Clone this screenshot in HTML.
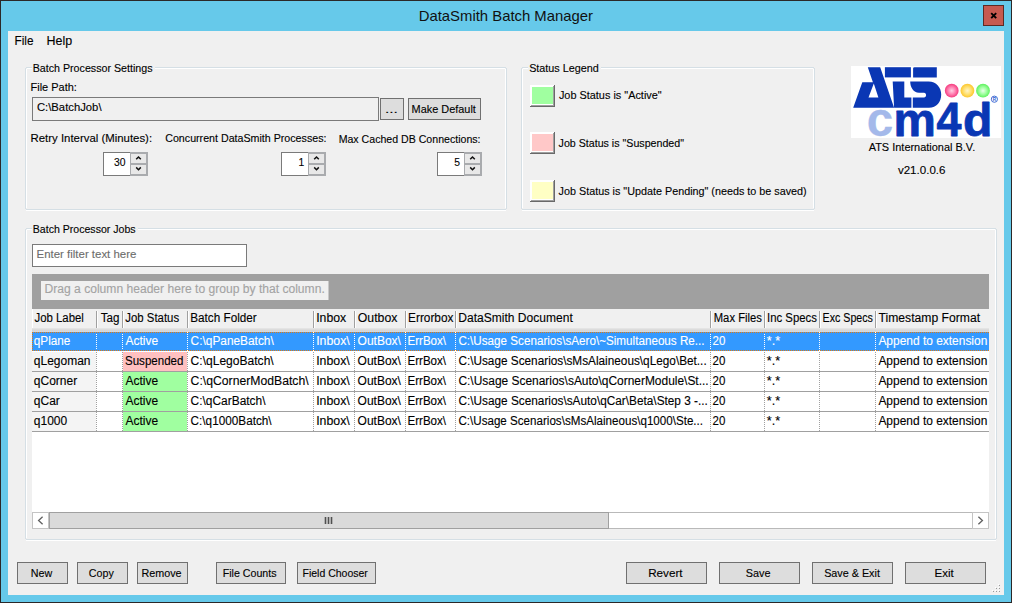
<!DOCTYPE html>
<html><head><meta charset="utf-8"><title>DataSmith Batch Manager</title>
<style>
html,body{margin:0;padding:0;width:1012px;height:603px;overflow:hidden;background:#f0f0f0;}
svg{display:block;font-family:"Liberation Sans",sans-serif;}
</style></head><body>
<svg width="1012" height="603" viewBox="0 0 1012 603" shape-rendering="crispEdges">
<g shape-rendering="auto">
<rect x="0" y="0" width="1012" height="603" fill="#2b2828"/>
<rect x="1" y="1" width="1010" height="601" fill="#66c9ea"/>
<rect x="8" y="31" width="996" height="564" fill="#f0f0f0"/>
<text x="418.71" y="20.70" font-size="15" fill="#111" textLength="174.31" lengthAdjust="spacingAndGlyphs">DataSmith Batch Manager</text>
<rect x="983.5" y="5.5" width="20" height="20" fill="#c65a50" stroke="#5c2a24" stroke-width="1"/>
<path d="M991.2,13.2 L996.2,18.2 M996.2,13.2 L991.2,18.2" stroke="#000" stroke-width="1.9"/>
<text x="14.52" y="44.90" font-size="12" fill="#000" stroke="#000" stroke-width="0.12" textLength="19.01" lengthAdjust="spacingAndGlyphs">File</text>
<text x="46.46" y="44.90" font-size="12" fill="#000" stroke="#000" stroke-width="0.12" textLength="25.64" lengthAdjust="spacingAndGlyphs">Help</text>
<rect x="26" y="67" width="6" height="1" fill="#d5dfe5"/>
<rect x="155" y="67" width="351" height="1" fill="#d5dfe5"/>
<rect x="27" y="68" width="5" height="1" fill="#fff"/>
<rect x="155" y="68" width="350" height="1" fill="#fff"/>
<rect x="25" y="68" width="1" height="141" fill="#d5dfe5"/>
<rect x="26" y="69" width="1" height="139" fill="#fff"/>
<rect x="506" y="68" width="1" height="141" fill="#d5dfe5"/>
<rect x="505" y="69" width="1" height="139" fill="#fff"/>
<rect x="26" y="209" width="480" height="1" fill="#d5dfe5"/>
<rect x="26" y="210" width="480" height="1" fill="#fff"/>
<text x="32.66" y="72.00" font-size="11.5" fill="#000" stroke="#000" stroke-width="0.12" textLength="119.92" lengthAdjust="spacingAndGlyphs">Batch Processor Settings</text>
<text x="30.54" y="90.70" font-size="11.5" fill="#000" stroke="#000" stroke-width="0.12" textLength="46.39" lengthAdjust="spacingAndGlyphs">File Path:</text>
<rect x="32.5" y="97.5" width="346" height="23" fill="#f0f0f0" stroke="#7a7a7a" stroke-width="1"/>
<text x="36.91" y="111.00" font-size="11.5" fill="#000" stroke="#000" stroke-width="0.12" textLength="64.63" lengthAdjust="spacingAndGlyphs">C:\BatchJob\</text>
<rect x="380.5" y="98.5" width="23" height="21" fill="#dddddd" stroke="#707070" stroke-width="1"/>
<text x="384.94" y="113.00" font-size="11.5" fill="#000" stroke="#000" stroke-width="0.12" textLength="12.99" lengthAdjust="spacingAndGlyphs">...</text>
<rect x="408.5" y="98.5" width="72" height="21" fill="#dddddd" stroke="#707070" stroke-width="1"/>
<text x="411.55" y="113.00" font-size="11.5" fill="#000" stroke="#000" stroke-width="0.12" textLength="64.30" lengthAdjust="spacingAndGlyphs">Make Default</text>
<text x="30.51" y="142.10" font-size="11.5" fill="#000" stroke="#000" stroke-width="0.12" textLength="121.58" lengthAdjust="spacingAndGlyphs">Retry Interval (Minutes):</text>
<text x="165.24" y="142.40" font-size="11.5" fill="#000" stroke="#000" stroke-width="0.12" textLength="161.22" lengthAdjust="spacingAndGlyphs">Concurrent DataSmith Processes:</text>
<text x="338.67" y="142.50" font-size="11.5" fill="#000" stroke="#000" stroke-width="0.12" textLength="141.89" lengthAdjust="spacingAndGlyphs">Max Cached DB Connections:</text>
<rect x="103.5" y="152.5" width="44" height="23" fill="#fff" stroke="#7a7a7a" stroke-width="1"/>
<rect x="130" y="152" width="18" height="24" fill="#a9abae"/>
<rect x="131" y="154" width="15" height="9" fill="#e8e8e8"/>
<rect x="131" y="165" width="15" height="9" fill="#e8e8e8"/>
<path d="M136.2,159.3 L138.5,157.0 L140.8,159.3" stroke="#111" stroke-width="1.5" fill="none"/>
<path d="M136.2,167.4 L138.5,169.7 L140.8,167.4" stroke="#111" stroke-width="1.5" fill="none"/>
<text x="114.04" y="165.90" font-size="11.5" fill="#000" stroke="#000" stroke-width="0.12" textLength="11.51" lengthAdjust="spacingAndGlyphs">30</text>
<rect x="281.5" y="152.5" width="44" height="23" fill="#fff" stroke="#7a7a7a" stroke-width="1"/>
<rect x="308" y="152" width="18" height="24" fill="#a9abae"/>
<rect x="309" y="154" width="15" height="9" fill="#e8e8e8"/>
<rect x="309" y="165" width="15" height="9" fill="#e8e8e8"/>
<path d="M314.2,159.3 L316.5,157.0 L318.8,159.3" stroke="#111" stroke-width="1.5" fill="none"/>
<path d="M314.2,167.4 L316.5,169.7 L318.8,167.4" stroke="#111" stroke-width="1.5" fill="none"/>
<text x="298.58" y="165.90" font-size="11.5" fill="#000" stroke="#000" stroke-width="0.12" textLength="5.76" lengthAdjust="spacingAndGlyphs">1</text>
<rect x="437.5" y="152.5" width="44" height="23" fill="#fff" stroke="#7a7a7a" stroke-width="1"/>
<rect x="464" y="152" width="18" height="24" fill="#a9abae"/>
<rect x="465" y="154" width="15" height="9" fill="#e8e8e8"/>
<rect x="465" y="165" width="15" height="9" fill="#e8e8e8"/>
<path d="M470.2,159.3 L472.5,157.0 L474.8,159.3" stroke="#111" stroke-width="1.5" fill="none"/>
<path d="M470.2,167.4 L472.5,169.7 L474.8,167.4" stroke="#111" stroke-width="1.5" fill="none"/>
<text x="454.29" y="165.90" font-size="11.5" fill="#000" stroke="#000" stroke-width="0.12" textLength="5.76" lengthAdjust="spacingAndGlyphs">5</text>
<rect x="522" y="67" width="6" height="1" fill="#d5dfe5"/>
<rect x="601" y="67" width="213" height="1" fill="#d5dfe5"/>
<rect x="523" y="68" width="5" height="1" fill="#fff"/>
<rect x="601" y="68" width="212" height="1" fill="#fff"/>
<rect x="521" y="68" width="1" height="141" fill="#d5dfe5"/>
<rect x="522" y="69" width="1" height="139" fill="#fff"/>
<rect x="814" y="68" width="1" height="141" fill="#d5dfe5"/>
<rect x="813" y="69" width="1" height="139" fill="#fff"/>
<rect x="522" y="209" width="292" height="1" fill="#d5dfe5"/>
<rect x="522" y="210" width="292" height="1" fill="#fff"/>
<text x="529.13" y="71.90" font-size="11.5" fill="#000" stroke="#000" stroke-width="0.12" textLength="69.70" lengthAdjust="spacingAndGlyphs">Status Legend</text>
<rect x="530" y="85" width="25" height="22" fill="#696969"/>
<rect x="530" y="85" width="24" height="21" fill="#ffffff"/>
<rect x="531" y="86" width="23" height="20" fill="#a0a0a0"/>
<rect x="531" y="86" width="22" height="19" fill="#ffffff"/>
<rect x="532" y="87" width="21" height="17" fill="#a0ffa0"/>
<rect x="530" y="132" width="25" height="22" fill="#696969"/>
<rect x="530" y="132" width="24" height="21" fill="#ffffff"/>
<rect x="531" y="133" width="23" height="20" fill="#a0a0a0"/>
<rect x="531" y="133" width="22" height="19" fill="#ffffff"/>
<rect x="532" y="134" width="21" height="17" fill="#ffc8c8"/>
<rect x="530" y="180" width="25" height="22" fill="#696969"/>
<rect x="530" y="180" width="24" height="21" fill="#ffffff"/>
<rect x="531" y="181" width="23" height="20" fill="#a0a0a0"/>
<rect x="531" y="181" width="22" height="19" fill="#ffffff"/>
<rect x="532" y="182" width="21" height="17" fill="#ffffc4"/>
<text x="558.91" y="98.90" font-size="11.5" fill="#000" stroke="#000" stroke-width="0.12" textLength="102.78" lengthAdjust="spacingAndGlyphs">Job Status is &quot;Active&quot;</text>
<text x="558.61" y="146.90" font-size="11.5" fill="#000" stroke="#000" stroke-width="0.12" textLength="125.34" lengthAdjust="spacingAndGlyphs">Job Status is &quot;Suspended&quot;</text>
<text x="558.61" y="194.90" font-size="11.5" fill="#000" stroke="#000" stroke-width="0.12" textLength="248.06" lengthAdjust="spacingAndGlyphs">Job Status is &quot;Update Pending&quot; (needs to be saved)</text>
<g transform="translate(851,66)">
<rect x="0" y="0" width="150" height="72" fill="#fff"/>
<path fill="#0a37b4" fill-rule="evenodd" d="M16.8,1.2 L29.2,1.2 L43.1,41.7 L2.2,41.7 L11.3,16.2 L21.9,16.2 Z M17.5,31.5 L27.4,31.5 L22.8,17.4 Z"/>
<rect x="33.9" y="1.2" width="26" height="10.2" fill="#0a37b4"/>
<path fill="#0a37b4" d="M63.5,1.2 L85.8,1.2 L85.8,11.4 L62.1,11.4 L62.1,2.6 Q62.1,1.2 63.5,1.2 Z"/>
<path fill="#0a37b4" d="M41.7,15.4 L53.3,15.4 L53.3,31.5 L60.4,31.5 L60.4,41.7 L43.1,41.7 Z"/>
<path fill="#0a37b4" d="M59.2,15.4 L77.5,15.4 C85.5,15.4 90.2,21.5 90.2,28.5 C90.2,36 85.5,41.7 78,41.7 L61.8,41.7 L61.8,31.5 L73,31.5 C75.8,31.5 75.8,26.7 73,26.7 L68,26.7 C62.5,26.7 59.2,21 59.2,15.4 Z"/>
<defs><radialGradient id="gp" cx="0.5" cy="0.5" r="0.5"><stop offset="0" stop-color="#ffd0e4"/><stop offset="0.55" stop-color="#ff7fb0"/><stop offset="1" stop-color="#f43a7e"/></radialGradient><radialGradient id="gy" cx="0.5" cy="0.5" r="0.5"><stop offset="0" stop-color="#fff4c8"/><stop offset="0.55" stop-color="#ffe070"/><stop offset="1" stop-color="#fcc62c"/></radialGradient><radialGradient id="gg" cx="0.5" cy="0.5" r="0.5"><stop offset="0" stop-color="#eaffea"/><stop offset="0.55" stop-color="#9cff9c"/><stop offset="1" stop-color="#5cf05c"/></radialGradient></defs>
<circle cx="100.7" cy="24.7" r="6.9" fill="url(#gp)"/>
<circle cx="116.4" cy="24.7" r="6.9" fill="url(#gy)"/>
<circle cx="132" cy="24.7" r="6.9" fill="url(#gg)"/>
<circle cx="143.4" cy="33.2" r="3.1" fill="none" stroke="#2f5fcf" stroke-width="0.9"/>
<text x="141.8" y="35" font-size="4.6" fill="#2f5fcf" font-family="Liberation Sans" font-weight="bold">R</text>
</g>
<text transform="translate(866.85,135.95) scale(1.0000,1)" font-size="47.50" fill="#a4b9ea" stroke="#a4b9ea" stroke-width="0.3" stroke-linejoin="round" font-weight="bold">c</text>
<text transform="translate(893.54,135.90) scale(1.0197,1)" font-size="46.70" fill="#0a37b4" stroke="#0a37b4" stroke-width="0.8" stroke-linejoin="round" font-weight="bold">m</text>
<text transform="translate(936.56,135.90) scale(0.9163,1)" font-size="49.00" fill="#0a37b4" stroke="#0a37b4" stroke-width="0.8" stroke-linejoin="round" font-weight="bold">4</text>
<text transform="translate(963.04,135.70) scale(1.0297,1)" font-size="46.80" fill="#0a37b4" stroke="#0a37b4" stroke-width="0.8" stroke-linejoin="round" font-weight="bold">d</text>
<text x="868.70" y="151.00" font-size="11.5" fill="#000" stroke="#000" stroke-width="0.12" textLength="106.52" lengthAdjust="spacingAndGlyphs">ATS International B.V.</text>
<text x="897.90" y="173.50" font-size="11.5" fill="#000" stroke="#000" stroke-width="0.12" textLength="47.62" lengthAdjust="spacingAndGlyphs">v21.0.0.6</text>
<rect x="26" y="228" width="6" height="1" fill="#d5dfe5"/>
<rect x="138" y="228" width="858" height="1" fill="#d5dfe5"/>
<rect x="27" y="229" width="5" height="1" fill="#fff"/>
<rect x="138" y="229" width="857" height="1" fill="#fff"/>
<rect x="25" y="229" width="1" height="310" fill="#d5dfe5"/>
<rect x="26" y="230" width="1" height="308" fill="#fff"/>
<rect x="996" y="229" width="1" height="310" fill="#d5dfe5"/>
<rect x="995" y="230" width="1" height="308" fill="#fff"/>
<rect x="26" y="539" width="970" height="1" fill="#d5dfe5"/>
<rect x="26" y="540" width="970" height="1" fill="#fff"/>
<text x="32.77" y="233.00" font-size="11.5" fill="#000" stroke="#000" stroke-width="0.12" textLength="102.84" lengthAdjust="spacingAndGlyphs">Batch Processor Jobs</text>
<rect x="32.5" y="244.5" width="214" height="22" fill="#fff" stroke="#7a7a7a" stroke-width="1"/>
<text x="36.61" y="258.00" font-size="11.5" fill="#6d6d6d" stroke="#6d6d6d" stroke-width="0.12" textLength="99.74" lengthAdjust="spacingAndGlyphs">Enter filter text here</text>
<rect x="32" y="274" width="957" height="35" fill="#a0a0a0"/>
<rect x="41" y="281" width="287.5" height="19" fill="#f0f0f0"/>
<text x="44.49" y="293.40" font-size="12" fill="#a3a3a3" stroke="#a3a3a3" stroke-width="0.12" textLength="280.28" lengthAdjust="spacingAndGlyphs">Drag a column header here to group by that column.</text>
<rect x="32" y="309" width="957" height="23" fill="#f0f0f0"/>
<rect x="32" y="328" width="957" height="1" fill="#e4e4e4"/>
<rect x="32" y="329" width="957" height="1" fill="#dcdcdc"/>
<rect x="32" y="330" width="957" height="1" fill="#d6d6d6"/>
<rect x="32" y="331" width="957" height="1" fill="#d8d8d8"/>
<rect x="32" y="309" width="1" height="19" fill="#ffffff"/>
<rect x="96" y="311" width="1" height="17" fill="#a0a0a0"/>
<rect x="97" y="311" width="1" height="17" fill="#ffffff"/>
<rect x="122" y="311" width="1" height="17" fill="#a0a0a0"/>
<rect x="123" y="311" width="1" height="17" fill="#ffffff"/>
<rect x="187" y="311" width="1" height="17" fill="#a0a0a0"/>
<rect x="188" y="311" width="1" height="17" fill="#ffffff"/>
<rect x="313" y="311" width="1" height="17" fill="#a0a0a0"/>
<rect x="314" y="311" width="1" height="17" fill="#ffffff"/>
<rect x="354" y="311" width="1" height="17" fill="#a0a0a0"/>
<rect x="355" y="311" width="1" height="17" fill="#ffffff"/>
<rect x="405" y="311" width="1" height="17" fill="#a0a0a0"/>
<rect x="406" y="311" width="1" height="17" fill="#ffffff"/>
<rect x="455" y="311" width="1" height="17" fill="#a0a0a0"/>
<rect x="456" y="311" width="1" height="17" fill="#ffffff"/>
<rect x="710" y="311" width="1" height="17" fill="#a0a0a0"/>
<rect x="711" y="311" width="1" height="17" fill="#ffffff"/>
<rect x="764" y="311" width="1" height="17" fill="#a0a0a0"/>
<rect x="765" y="311" width="1" height="17" fill="#ffffff"/>
<rect x="819" y="311" width="1" height="17" fill="#a0a0a0"/>
<rect x="820" y="311" width="1" height="17" fill="#ffffff"/>
<rect x="875" y="311" width="1" height="17" fill="#a0a0a0"/>
<rect x="876" y="311" width="1" height="17" fill="#ffffff"/>
<text x="34.51" y="322.20" font-size="12" fill="#000" stroke="#000" stroke-width="0.12" textLength="49.39" lengthAdjust="spacingAndGlyphs">Job Label</text>
<text x="100.81" y="322.20" font-size="12" fill="#000" stroke="#000" stroke-width="0.12" textLength="18.71" lengthAdjust="spacingAndGlyphs">Tag</text>
<text x="125.31" y="322.20" font-size="12" fill="#000" stroke="#000" stroke-width="0.12" textLength="53.77" lengthAdjust="spacingAndGlyphs">Job Status</text>
<text x="190.22" y="322.20" font-size="12" fill="#000" stroke="#000" stroke-width="0.12" textLength="66.51" lengthAdjust="spacingAndGlyphs">Batch Folder</text>
<text x="316.18" y="322.20" font-size="12" fill="#000" stroke="#000" stroke-width="0.12" textLength="29.98" lengthAdjust="spacingAndGlyphs">Inbox</text>
<text x="357.79" y="322.20" font-size="12" fill="#000" stroke="#000" stroke-width="0.12" textLength="39.61" lengthAdjust="spacingAndGlyphs">Outbox</text>
<text x="408.12" y="322.20" font-size="12" fill="#000" stroke="#000" stroke-width="0.12" textLength="45.30" lengthAdjust="spacingAndGlyphs">Errorbox</text>
<text x="458.30" y="322.20" font-size="12" fill="#000" stroke="#000" stroke-width="0.12" textLength="114.45" lengthAdjust="spacingAndGlyphs">DataSmith Document</text>
<text x="713.76" y="322.20" font-size="12" fill="#000" stroke="#000" stroke-width="0.12" textLength="48.15" lengthAdjust="spacingAndGlyphs">Max Files</text>
<text x="767.06" y="322.20" font-size="12" fill="#000" stroke="#000" stroke-width="0.12" textLength="49.91" lengthAdjust="spacingAndGlyphs">Inc Specs</text>
<text x="822.61" y="322.20" font-size="12" fill="#000" stroke="#000" stroke-width="0.12" textLength="50.33" lengthAdjust="spacingAndGlyphs">Exc Specs</text>
<text x="878.50" y="322.20" font-size="12" fill="#000" stroke="#000" stroke-width="0.12" textLength="101.54" lengthAdjust="spacingAndGlyphs">Timestamp Format</text>
<rect x="32" y="332" width="957" height="180" fill="#ffffff"/>
<clipPath id="gclip"><rect x="32" y="309" width="957" height="203"/></clipPath><g clip-path="url(#gclip)">
<rect x="32" y="332" width="957" height="19" fill="#3399ff"/>
<text x="33.81" y="344.70" font-size="12" fill="#fff" stroke="#fff" stroke-width="0.12" textLength="36.54" lengthAdjust="spacingAndGlyphs">qPlane</text>
<text x="125.50" y="344.70" font-size="12" fill="#fff" stroke="#fff" stroke-width="0.12" textLength="32.68" lengthAdjust="spacingAndGlyphs">Active</text>
<text x="190.61" y="344.70" font-size="12" fill="#fff" stroke="#fff" stroke-width="0.12" textLength="83.15" lengthAdjust="spacingAndGlyphs">C:\qPaneBatch\</text>
<text x="316.17" y="344.70" font-size="12" fill="#fff" stroke="#fff" stroke-width="0.12" textLength="33.62" lengthAdjust="spacingAndGlyphs">Inbox\</text>
<text x="357.60" y="344.70" font-size="12" fill="#fff" stroke="#fff" stroke-width="0.12" textLength="43.35" lengthAdjust="spacingAndGlyphs">OutBox\</text>
<text x="407.43" y="344.70" font-size="12" fill="#fff" stroke="#fff" stroke-width="0.12" textLength="38.68" lengthAdjust="spacingAndGlyphs">ErrBox\</text>
<text x="458.42" y="344.70" font-size="12" fill="#fff" stroke="#fff" stroke-width="0.12" textLength="246.18" lengthAdjust="spacingAndGlyphs">C:\Usage Scenarios\sAero\~Simultaneous Re...</text>
<text x="712.62" y="344.70" font-size="12" fill="#fff" stroke="#fff" stroke-width="0.12" textLength="12.80" lengthAdjust="spacingAndGlyphs">20</text>
<text x="766.79" y="344.70" font-size="12" fill="#fff" stroke="#fff" stroke-width="0.12" textLength="13.40" lengthAdjust="spacingAndGlyphs">*.*</text>
<text x="878.40" y="344.70" font-size="12" fill="#fff" stroke="#fff" stroke-width="0.12" textLength="108.91" lengthAdjust="spacingAndGlyphs">Append to extension</text>
<line x1="96.5" y1="332" x2="96.5" y2="351" stroke="#ffffff" stroke-width="1" stroke-dasharray="1,1"/>
<line x1="122.5" y1="332" x2="122.5" y2="351" stroke="#ffffff" stroke-width="1" stroke-dasharray="1,1"/>
<line x1="187.5" y1="332" x2="187.5" y2="351" stroke="#ffffff" stroke-width="1" stroke-dasharray="1,1"/>
<line x1="313.5" y1="332" x2="313.5" y2="351" stroke="#ffffff" stroke-width="1" stroke-dasharray="1,1"/>
<line x1="354.5" y1="332" x2="354.5" y2="351" stroke="#ffffff" stroke-width="1" stroke-dasharray="1,1"/>
<line x1="405.5" y1="332" x2="405.5" y2="351" stroke="#ffffff" stroke-width="1" stroke-dasharray="1,1"/>
<line x1="455.5" y1="332" x2="455.5" y2="351" stroke="#ffffff" stroke-width="1" stroke-dasharray="1,1"/>
<line x1="710.5" y1="332" x2="710.5" y2="351" stroke="#ffffff" stroke-width="1" stroke-dasharray="1,1"/>
<line x1="764.5" y1="332" x2="764.5" y2="351" stroke="#ffffff" stroke-width="1" stroke-dasharray="1,1"/>
<line x1="819.5" y1="332" x2="819.5" y2="351" stroke="#ffffff" stroke-width="1" stroke-dasharray="1,1"/>
<line x1="875.5" y1="332" x2="875.5" y2="351" stroke="#ffffff" stroke-width="1" stroke-dasharray="1,1"/>
<rect x="32" y="352" width="64" height="19" fill="#f4f4f4"/>
<rect x="123" y="352" width="64" height="19" fill="#ffc0c0"/>
<rect x="32" y="371" width="957" height="1" fill="#a0a0a0"/>
<text x="33.80" y="364.70" font-size="12" fill="#000" stroke="#000" stroke-width="0.12" textLength="56.71" lengthAdjust="spacingAndGlyphs">qLegoman</text>
<text x="125.02" y="364.70" font-size="12" fill="#000" stroke="#000" stroke-width="0.12" textLength="58.37" lengthAdjust="spacingAndGlyphs">Suspended</text>
<text x="190.60" y="364.70" font-size="12" fill="#000" stroke="#000" stroke-width="0.12" textLength="83.12" lengthAdjust="spacingAndGlyphs">C:\qLegoBatch\</text>
<text x="316.17" y="364.70" font-size="12" fill="#000" stroke="#000" stroke-width="0.12" textLength="33.62" lengthAdjust="spacingAndGlyphs">Inbox\</text>
<text x="357.60" y="364.70" font-size="12" fill="#000" stroke="#000" stroke-width="0.12" textLength="43.35" lengthAdjust="spacingAndGlyphs">OutBox\</text>
<text x="407.43" y="364.70" font-size="12" fill="#000" stroke="#000" stroke-width="0.12" textLength="38.68" lengthAdjust="spacingAndGlyphs">ErrBox\</text>
<text x="458.41" y="364.70" font-size="12" fill="#000" stroke="#000" stroke-width="0.12" textLength="248.27" lengthAdjust="spacingAndGlyphs">C:\Usage Scenarios\sMsAlaineous\qLego\Bet...</text>
<text x="712.62" y="364.70" font-size="12" fill="#000" stroke="#000" stroke-width="0.12" textLength="12.80" lengthAdjust="spacingAndGlyphs">20</text>
<text x="766.79" y="364.70" font-size="12" fill="#000" stroke="#000" stroke-width="0.12" textLength="13.40" lengthAdjust="spacingAndGlyphs">*.*</text>
<text x="878.40" y="364.70" font-size="12" fill="#000" stroke="#000" stroke-width="0.12" textLength="108.91" lengthAdjust="spacingAndGlyphs">Append to extension</text>
<line x1="96.5" y1="352" x2="96.5" y2="371" stroke="#a0a0a0" stroke-width="1" stroke-dasharray="1,1"/>
<line x1="122.5" y1="352" x2="122.5" y2="371" stroke="#a0a0a0" stroke-width="1" stroke-dasharray="1,1"/>
<line x1="187.5" y1="352" x2="187.5" y2="371" stroke="#a0a0a0" stroke-width="1" stroke-dasharray="1,1"/>
<line x1="313.5" y1="352" x2="313.5" y2="371" stroke="#a0a0a0" stroke-width="1" stroke-dasharray="1,1"/>
<line x1="354.5" y1="352" x2="354.5" y2="371" stroke="#a0a0a0" stroke-width="1" stroke-dasharray="1,1"/>
<line x1="405.5" y1="352" x2="405.5" y2="371" stroke="#a0a0a0" stroke-width="1" stroke-dasharray="1,1"/>
<line x1="455.5" y1="352" x2="455.5" y2="371" stroke="#a0a0a0" stroke-width="1" stroke-dasharray="1,1"/>
<line x1="710.5" y1="352" x2="710.5" y2="371" stroke="#a0a0a0" stroke-width="1" stroke-dasharray="1,1"/>
<line x1="764.5" y1="352" x2="764.5" y2="371" stroke="#a0a0a0" stroke-width="1" stroke-dasharray="1,1"/>
<line x1="819.5" y1="352" x2="819.5" y2="371" stroke="#a0a0a0" stroke-width="1" stroke-dasharray="1,1"/>
<line x1="875.5" y1="352" x2="875.5" y2="371" stroke="#a0a0a0" stroke-width="1" stroke-dasharray="1,1"/>
<rect x="32" y="372" width="64" height="19" fill="#f4f4f4"/>
<rect x="123" y="372" width="64" height="19" fill="#a0ffa0"/>
<rect x="32" y="391" width="957" height="1" fill="#a0a0a0"/>
<text x="33.80" y="384.70" font-size="12" fill="#000" stroke="#000" stroke-width="0.12" textLength="43.35" lengthAdjust="spacingAndGlyphs">qCorner</text>
<text x="125.50" y="384.70" font-size="12" fill="#000" stroke="#000" stroke-width="0.12" textLength="32.68" lengthAdjust="spacingAndGlyphs">Active</text>
<text x="190.59" y="384.70" font-size="12" fill="#000" stroke="#000" stroke-width="0.12" textLength="118.06" lengthAdjust="spacingAndGlyphs">C:\qCornerModBatch\</text>
<text x="316.17" y="384.70" font-size="12" fill="#000" stroke="#000" stroke-width="0.12" textLength="33.62" lengthAdjust="spacingAndGlyphs">Inbox\</text>
<text x="357.60" y="384.70" font-size="12" fill="#000" stroke="#000" stroke-width="0.12" textLength="43.35" lengthAdjust="spacingAndGlyphs">OutBox\</text>
<text x="407.43" y="384.70" font-size="12" fill="#000" stroke="#000" stroke-width="0.12" textLength="38.68" lengthAdjust="spacingAndGlyphs">ErrBox\</text>
<text x="458.40" y="384.70" font-size="12" fill="#000" stroke="#000" stroke-width="0.12" textLength="250.25" lengthAdjust="spacingAndGlyphs">C:\Usage Scenarios\sAuto\qCornerModule\St...</text>
<text x="712.62" y="384.70" font-size="12" fill="#000" stroke="#000" stroke-width="0.12" textLength="12.80" lengthAdjust="spacingAndGlyphs">20</text>
<text x="766.79" y="384.70" font-size="12" fill="#000" stroke="#000" stroke-width="0.12" textLength="13.40" lengthAdjust="spacingAndGlyphs">*.*</text>
<text x="878.40" y="384.70" font-size="12" fill="#000" stroke="#000" stroke-width="0.12" textLength="108.91" lengthAdjust="spacingAndGlyphs">Append to extension</text>
<line x1="96.5" y1="372" x2="96.5" y2="391" stroke="#a0a0a0" stroke-width="1" stroke-dasharray="1,1"/>
<line x1="122.5" y1="372" x2="122.5" y2="391" stroke="#a0a0a0" stroke-width="1" stroke-dasharray="1,1"/>
<line x1="187.5" y1="372" x2="187.5" y2="391" stroke="#a0a0a0" stroke-width="1" stroke-dasharray="1,1"/>
<line x1="313.5" y1="372" x2="313.5" y2="391" stroke="#a0a0a0" stroke-width="1" stroke-dasharray="1,1"/>
<line x1="354.5" y1="372" x2="354.5" y2="391" stroke="#a0a0a0" stroke-width="1" stroke-dasharray="1,1"/>
<line x1="405.5" y1="372" x2="405.5" y2="391" stroke="#a0a0a0" stroke-width="1" stroke-dasharray="1,1"/>
<line x1="455.5" y1="372" x2="455.5" y2="391" stroke="#a0a0a0" stroke-width="1" stroke-dasharray="1,1"/>
<line x1="710.5" y1="372" x2="710.5" y2="391" stroke="#a0a0a0" stroke-width="1" stroke-dasharray="1,1"/>
<line x1="764.5" y1="372" x2="764.5" y2="391" stroke="#a0a0a0" stroke-width="1" stroke-dasharray="1,1"/>
<line x1="819.5" y1="372" x2="819.5" y2="391" stroke="#a0a0a0" stroke-width="1" stroke-dasharray="1,1"/>
<line x1="875.5" y1="372" x2="875.5" y2="391" stroke="#a0a0a0" stroke-width="1" stroke-dasharray="1,1"/>
<rect x="32" y="392" width="64" height="19" fill="#f4f4f4"/>
<rect x="123" y="392" width="64" height="19" fill="#a0ffa0"/>
<rect x="32" y="411" width="957" height="1" fill="#a0a0a0"/>
<text x="33.80" y="404.70" font-size="12" fill="#000" stroke="#000" stroke-width="0.12" textLength="26.01" lengthAdjust="spacingAndGlyphs">qCar</text>
<text x="125.50" y="404.70" font-size="12" fill="#000" stroke="#000" stroke-width="0.12" textLength="32.68" lengthAdjust="spacingAndGlyphs">Active</text>
<text x="190.60" y="404.70" font-size="12" fill="#000" stroke="#000" stroke-width="0.12" textLength="74.96" lengthAdjust="spacingAndGlyphs">C:\qCarBatch\</text>
<text x="316.17" y="404.70" font-size="12" fill="#000" stroke="#000" stroke-width="0.12" textLength="33.62" lengthAdjust="spacingAndGlyphs">Inbox\</text>
<text x="357.60" y="404.70" font-size="12" fill="#000" stroke="#000" stroke-width="0.12" textLength="43.35" lengthAdjust="spacingAndGlyphs">OutBox\</text>
<text x="407.43" y="404.70" font-size="12" fill="#000" stroke="#000" stroke-width="0.12" textLength="38.68" lengthAdjust="spacingAndGlyphs">ErrBox\</text>
<text x="458.41" y="404.70" font-size="12" fill="#000" stroke="#000" stroke-width="0.12" textLength="249.43" lengthAdjust="spacingAndGlyphs">C:\Usage Scenarios\sAuto\qCar\Beta\Step 3 -...</text>
<text x="712.62" y="404.70" font-size="12" fill="#000" stroke="#000" stroke-width="0.12" textLength="12.80" lengthAdjust="spacingAndGlyphs">20</text>
<text x="766.79" y="404.70" font-size="12" fill="#000" stroke="#000" stroke-width="0.12" textLength="13.40" lengthAdjust="spacingAndGlyphs">*.*</text>
<text x="878.40" y="404.70" font-size="12" fill="#000" stroke="#000" stroke-width="0.12" textLength="108.91" lengthAdjust="spacingAndGlyphs">Append to extension</text>
<line x1="96.5" y1="392" x2="96.5" y2="411" stroke="#a0a0a0" stroke-width="1" stroke-dasharray="1,1"/>
<line x1="122.5" y1="392" x2="122.5" y2="411" stroke="#a0a0a0" stroke-width="1" stroke-dasharray="1,1"/>
<line x1="187.5" y1="392" x2="187.5" y2="411" stroke="#a0a0a0" stroke-width="1" stroke-dasharray="1,1"/>
<line x1="313.5" y1="392" x2="313.5" y2="411" stroke="#a0a0a0" stroke-width="1" stroke-dasharray="1,1"/>
<line x1="354.5" y1="392" x2="354.5" y2="411" stroke="#a0a0a0" stroke-width="1" stroke-dasharray="1,1"/>
<line x1="405.5" y1="392" x2="405.5" y2="411" stroke="#a0a0a0" stroke-width="1" stroke-dasharray="1,1"/>
<line x1="455.5" y1="392" x2="455.5" y2="411" stroke="#a0a0a0" stroke-width="1" stroke-dasharray="1,1"/>
<line x1="710.5" y1="392" x2="710.5" y2="411" stroke="#a0a0a0" stroke-width="1" stroke-dasharray="1,1"/>
<line x1="764.5" y1="392" x2="764.5" y2="411" stroke="#a0a0a0" stroke-width="1" stroke-dasharray="1,1"/>
<line x1="819.5" y1="392" x2="819.5" y2="411" stroke="#a0a0a0" stroke-width="1" stroke-dasharray="1,1"/>
<line x1="875.5" y1="392" x2="875.5" y2="411" stroke="#a0a0a0" stroke-width="1" stroke-dasharray="1,1"/>
<rect x="32" y="412" width="64" height="19" fill="#f4f4f4"/>
<rect x="123" y="412" width="64" height="19" fill="#a0ffa0"/>
<rect x="32" y="431" width="957" height="1" fill="#a0a0a0"/>
<text x="33.80" y="424.70" font-size="12" fill="#000" stroke="#000" stroke-width="0.12" textLength="33.37" lengthAdjust="spacingAndGlyphs">q1000</text>
<text x="125.50" y="424.70" font-size="12" fill="#000" stroke="#000" stroke-width="0.12" textLength="32.68" lengthAdjust="spacingAndGlyphs">Active</text>
<text x="190.61" y="424.70" font-size="12" fill="#000" stroke="#000" stroke-width="0.12" textLength="81.01" lengthAdjust="spacingAndGlyphs">C:\q1000Batch\</text>
<text x="316.17" y="424.70" font-size="12" fill="#000" stroke="#000" stroke-width="0.12" textLength="33.62" lengthAdjust="spacingAndGlyphs">Inbox\</text>
<text x="357.60" y="424.70" font-size="12" fill="#000" stroke="#000" stroke-width="0.12" textLength="43.35" lengthAdjust="spacingAndGlyphs">OutBox\</text>
<text x="407.43" y="424.70" font-size="12" fill="#000" stroke="#000" stroke-width="0.12" textLength="38.68" lengthAdjust="spacingAndGlyphs">ErrBox\</text>
<text x="458.42" y="424.70" font-size="12" fill="#000" stroke="#000" stroke-width="0.12" textLength="244.65" lengthAdjust="spacingAndGlyphs">C:\Usage Scenarios\sMsAlaineous\q1000\Ste...</text>
<text x="712.62" y="424.70" font-size="12" fill="#000" stroke="#000" stroke-width="0.12" textLength="12.80" lengthAdjust="spacingAndGlyphs">20</text>
<text x="766.79" y="424.70" font-size="12" fill="#000" stroke="#000" stroke-width="0.12" textLength="13.40" lengthAdjust="spacingAndGlyphs">*.*</text>
<text x="878.40" y="424.70" font-size="12" fill="#000" stroke="#000" stroke-width="0.12" textLength="108.91" lengthAdjust="spacingAndGlyphs">Append to extension</text>
<line x1="96.5" y1="412" x2="96.5" y2="431" stroke="#a0a0a0" stroke-width="1" stroke-dasharray="1,1"/>
<line x1="122.5" y1="412" x2="122.5" y2="431" stroke="#a0a0a0" stroke-width="1" stroke-dasharray="1,1"/>
<line x1="187.5" y1="412" x2="187.5" y2="431" stroke="#a0a0a0" stroke-width="1" stroke-dasharray="1,1"/>
<line x1="313.5" y1="412" x2="313.5" y2="431" stroke="#a0a0a0" stroke-width="1" stroke-dasharray="1,1"/>
<line x1="354.5" y1="412" x2="354.5" y2="431" stroke="#a0a0a0" stroke-width="1" stroke-dasharray="1,1"/>
<line x1="405.5" y1="412" x2="405.5" y2="431" stroke="#a0a0a0" stroke-width="1" stroke-dasharray="1,1"/>
<line x1="455.5" y1="412" x2="455.5" y2="431" stroke="#a0a0a0" stroke-width="1" stroke-dasharray="1,1"/>
<line x1="710.5" y1="412" x2="710.5" y2="431" stroke="#a0a0a0" stroke-width="1" stroke-dasharray="1,1"/>
<line x1="764.5" y1="412" x2="764.5" y2="431" stroke="#a0a0a0" stroke-width="1" stroke-dasharray="1,1"/>
<line x1="819.5" y1="412" x2="819.5" y2="431" stroke="#a0a0a0" stroke-width="1" stroke-dasharray="1,1"/>
<line x1="875.5" y1="412" x2="875.5" y2="431" stroke="#a0a0a0" stroke-width="1" stroke-dasharray="1,1"/>
<line x1="32" y1="332.5" x2="989" y2="332.5" stroke="#e07a10" stroke-width="1" stroke-dasharray="1,1"/>
<line x1="32" y1="350.5" x2="989" y2="350.5" stroke="#e07a10" stroke-width="1" stroke-dasharray="1,1"/>
<line x1="32.5" y1="332" x2="32.5" y2="351" stroke="#e07a10" stroke-width="1" stroke-dasharray="1,1"/>
</g>
<rect x="32.5" y="512.5" width="956" height="16" fill="#ffffff" stroke="#b9b9b9" stroke-width="1"/>
<rect x="32.5" y="512.5" width="16" height="16" fill="#ffffff" stroke="#c4c4c4" stroke-width="1"/>
<path d="M42.6,516.8 L38.6,520.5 L42.6,524.2" stroke="#606060" stroke-width="1.3" fill="none"/>
<rect x="49.5" y="512.5" width="559" height="16" fill="#dadada" stroke="#a0a0a0" stroke-width="1"/>
<rect x="324.7" y="517" width="1.6" height="7" fill="#505050"/>
<rect x="327.7" y="517" width="1.6" height="7" fill="#505050"/>
<rect x="330.7" y="517" width="1.6" height="7" fill="#505050"/>
<rect x="972.5" y="512.5" width="16" height="16" fill="#ffffff" stroke="#c4c4c4" stroke-width="1"/>
<path d="M978.4,516.8 L982.4,520.5 L978.4,524.2" stroke="#606060" stroke-width="1.3" fill="none"/>
<rect x="17.5" y="562.5" width="50" height="21" fill="#dddddd" stroke="#707070" stroke-width="1"/>
<text x="30.76" y="577.10" font-size="11.5" fill="#000" stroke="#000" stroke-width="0.12" textLength="21.44" lengthAdjust="spacingAndGlyphs">New</text>
<rect x="77.5" y="562.5" width="50" height="21" fill="#dddddd" stroke="#707070" stroke-width="1"/>
<text x="88.84" y="577.10" font-size="11.5" fill="#000" stroke="#000" stroke-width="0.12" textLength="25.00" lengthAdjust="spacingAndGlyphs">Copy</text>
<rect x="137.5" y="562.5" width="50" height="21" fill="#dddddd" stroke="#707070" stroke-width="1"/>
<text x="141.46" y="577.10" font-size="11.5" fill="#000" stroke="#000" stroke-width="0.12" textLength="40.13" lengthAdjust="spacingAndGlyphs">Remove</text>
<rect x="216.5" y="562.5" width="69" height="21" fill="#dddddd" stroke="#707070" stroke-width="1"/>
<text x="222.67" y="577.10" font-size="11.5" fill="#000" stroke="#000" stroke-width="0.12" textLength="53.86" lengthAdjust="spacingAndGlyphs">File Counts</text>
<rect x="297.5" y="562.5" width="78" height="21" fill="#dddddd" stroke="#707070" stroke-width="1"/>
<text x="302.48" y="577.10" font-size="11.5" fill="#000" stroke="#000" stroke-width="0.12" textLength="65.39" lengthAdjust="spacingAndGlyphs">Field Chooser</text>
<rect x="626.5" y="562.5" width="80" height="21" fill="#dddddd" stroke="#707070" stroke-width="1"/>
<text x="648.19" y="577.10" font-size="11.5" fill="#000" stroke="#000" stroke-width="0.12" textLength="34.39" lengthAdjust="spacingAndGlyphs">Revert</text>
<rect x="719.5" y="562.5" width="80" height="21" fill="#dddddd" stroke="#707070" stroke-width="1"/>
<text x="745.83" y="577.10" font-size="11.5" fill="#000" stroke="#000" stroke-width="0.12" textLength="24.75" lengthAdjust="spacingAndGlyphs">Save</text>
<rect x="812.5" y="562.5" width="80" height="21" fill="#dddddd" stroke="#707070" stroke-width="1"/>
<text x="824.13" y="577.10" font-size="11.5" fill="#000" stroke="#000" stroke-width="0.12" textLength="55.80" lengthAdjust="spacingAndGlyphs">Save &amp; Exit</text>
<rect x="905.5" y="562.5" width="80" height="21" fill="#dddddd" stroke="#707070" stroke-width="1"/>
<text x="934.50" y="577.10" font-size="11.5" fill="#000" stroke="#000" stroke-width="0.12" textLength="19.17" lengthAdjust="spacingAndGlyphs">Exit</text>
<rect x="998" y="584" width="1" height="1" fill="#ffffff"/>
<rect x="999" y="585" width="1" height="1" fill="#9a9a9a"/>
<rect x="995" y="587" width="1" height="1" fill="#ffffff"/>
<rect x="996" y="588" width="1" height="1" fill="#9a9a9a"/>
<rect x="998" y="587" width="1" height="1" fill="#ffffff"/>
<rect x="999" y="588" width="1" height="1" fill="#9a9a9a"/>
<rect x="992" y="590" width="1" height="1" fill="#ffffff"/>
<rect x="993" y="591" width="1" height="1" fill="#9a9a9a"/>
<rect x="995" y="590" width="1" height="1" fill="#ffffff"/>
<rect x="996" y="591" width="1" height="1" fill="#9a9a9a"/>
<rect x="998" y="590" width="1" height="1" fill="#ffffff"/>
<rect x="999" y="591" width="1" height="1" fill="#9a9a9a"/>
</g>
</svg>
</body></html>
